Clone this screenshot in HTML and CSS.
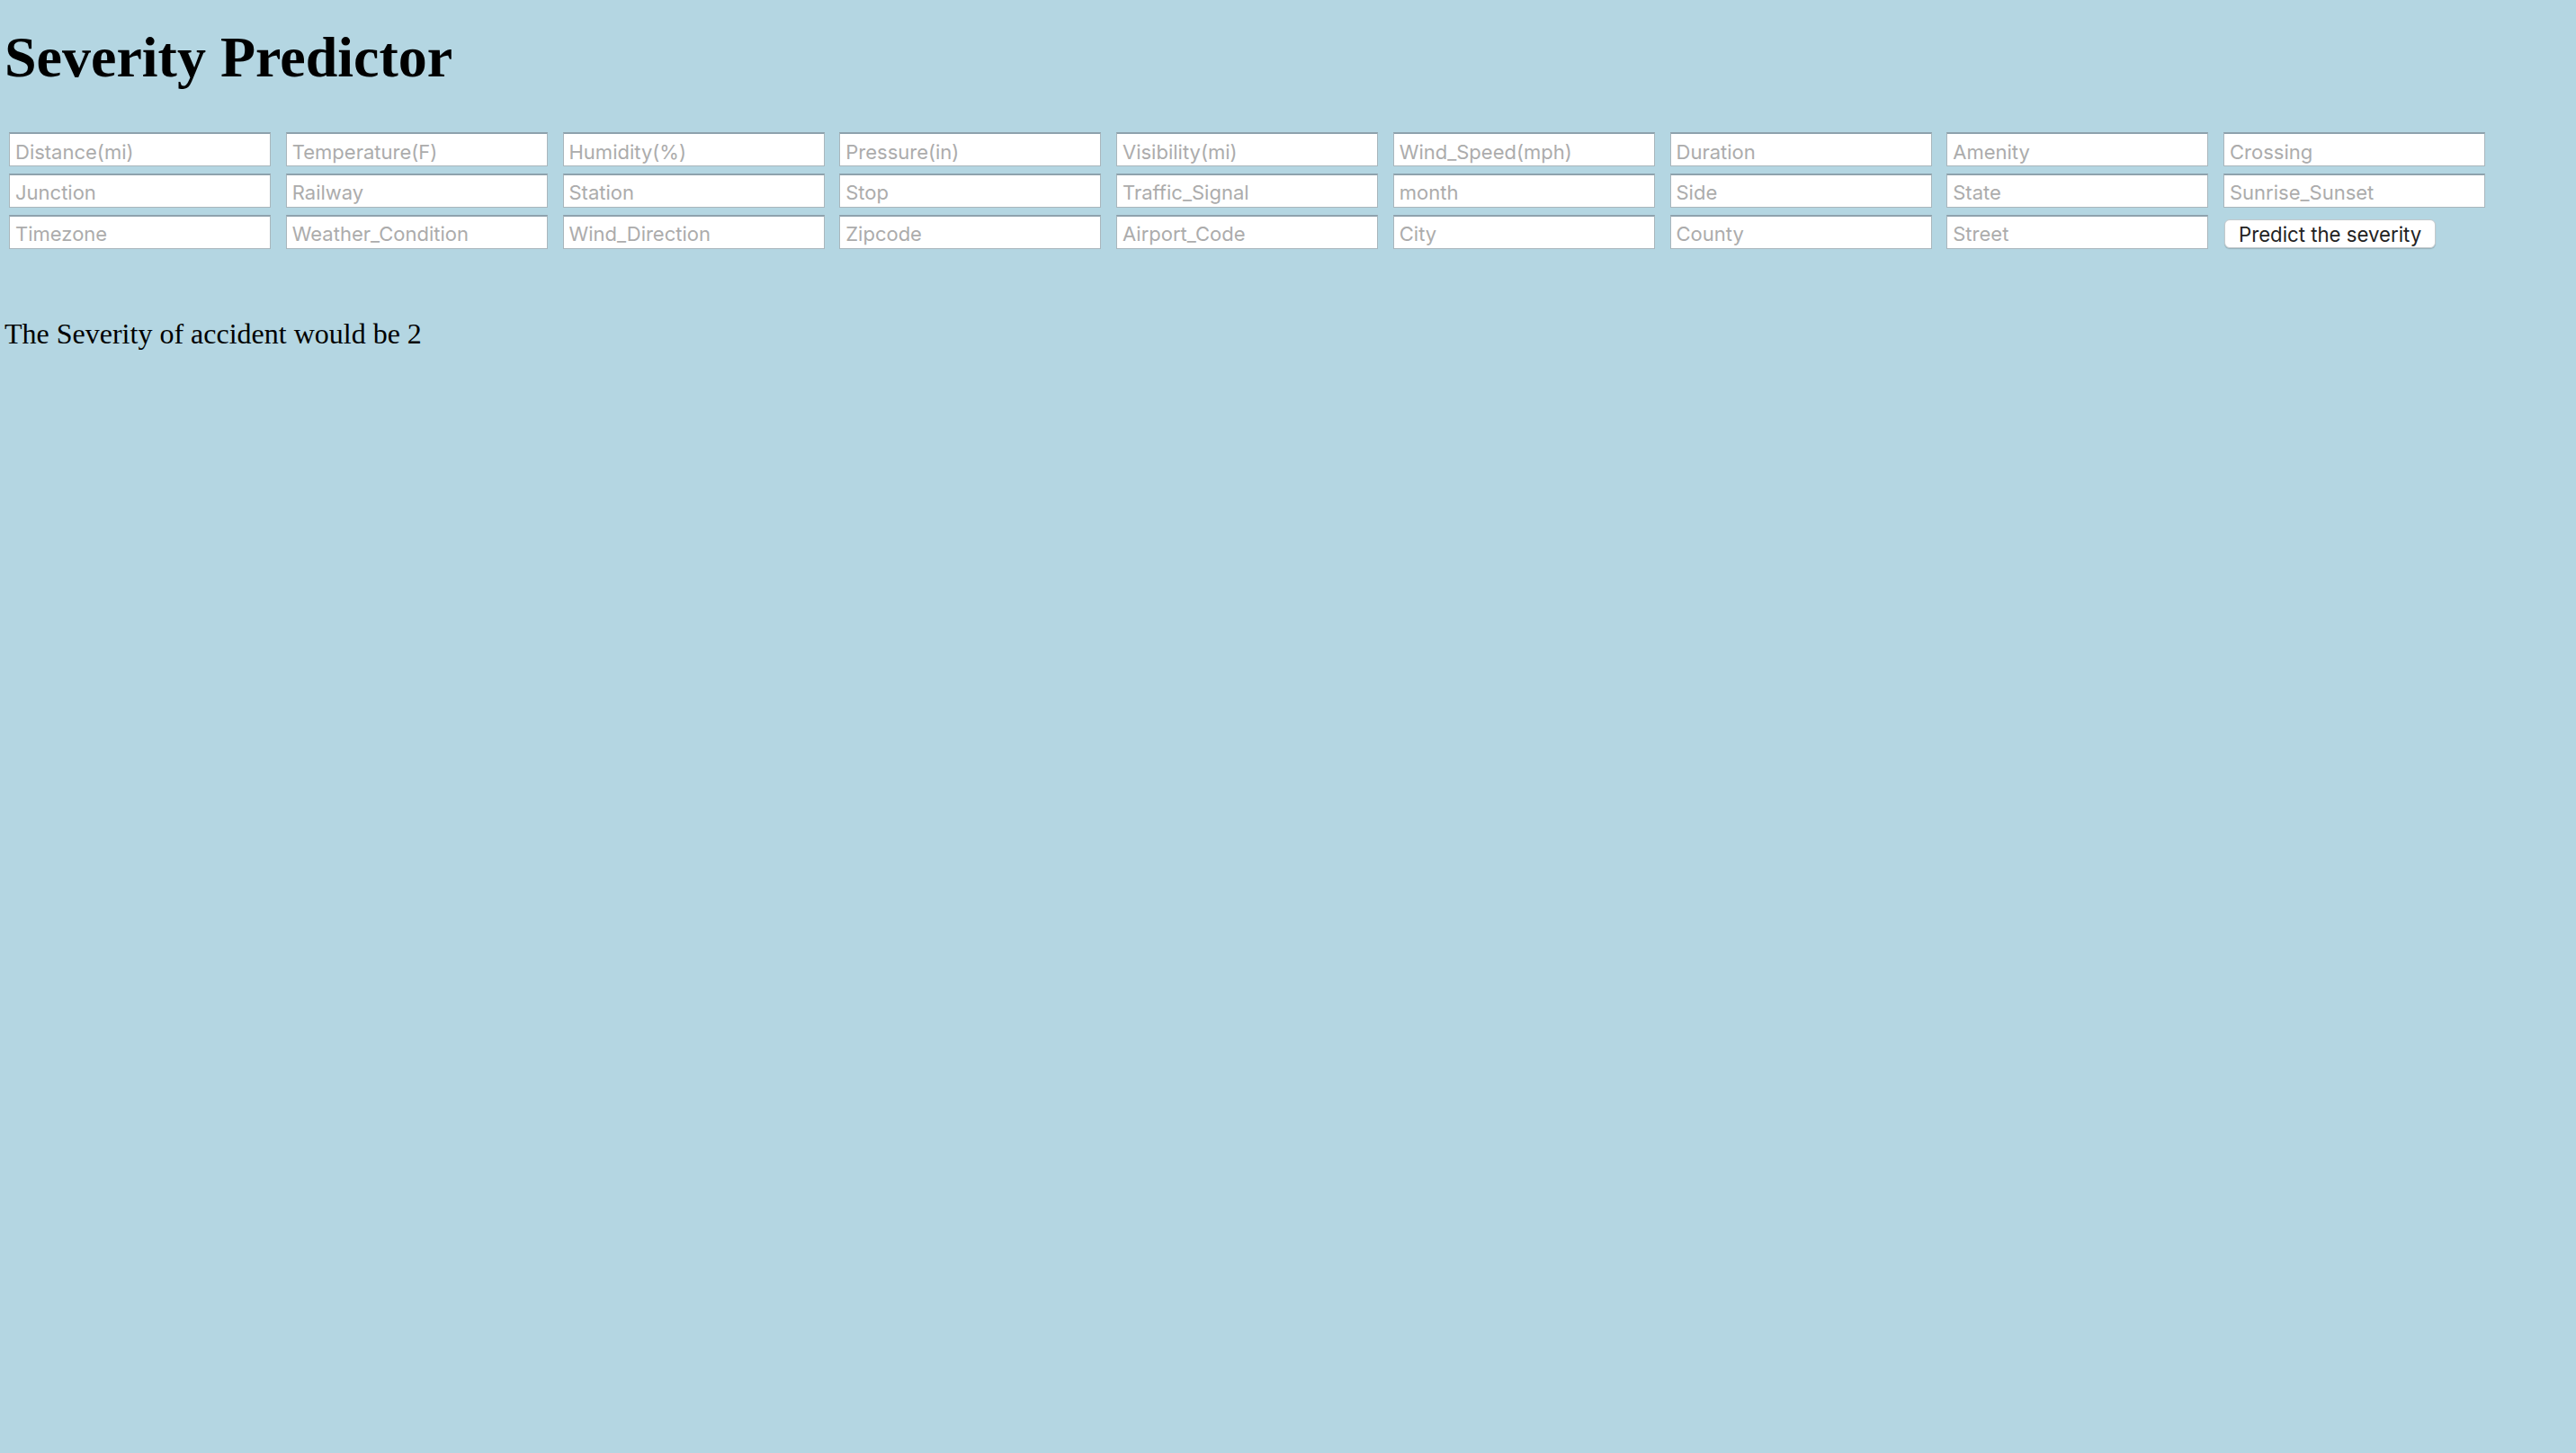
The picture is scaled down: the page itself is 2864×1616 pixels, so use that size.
FILE: index.html
```html
<!DOCTYPE html>
<html lang="en">
<head>
<meta charset="utf-8">
<title>Severity Predictor</title>
<link rel="stylesheet" href="styles.css">
</head>
<body>
<h1 class="title">Severity Predictor</h1>
<form class="fields">
  <input class="field" type="text" placeholder="Distance(mi)">
  <input class="field" type="text" placeholder="Temperature(F)">
  <input class="field" type="text" placeholder="Humidity(%)">
  <input class="field" type="text" placeholder="Pressure(in)">
  <input class="field" type="text" placeholder="Visibility(mi)">
  <input class="field" type="text" placeholder="Wind_Speed(mph)">
  <input class="field" type="text" placeholder="Duration">
  <input class="field" type="text" placeholder="Amenity">
  <input class="field" type="text" placeholder="Crossing">
  <input class="field" type="text" placeholder="Junction">
  <input class="field" type="text" placeholder="Railway">
  <input class="field" type="text" placeholder="Station">
  <input class="field" type="text" placeholder="Stop">
  <input class="field" type="text" placeholder="Traffic_Signal">
  <input class="field" type="text" placeholder="month">
  <input class="field" type="text" placeholder="Side">
  <input class="field" type="text" placeholder="State">
  <input class="field" type="text" placeholder="Sunrise_Sunset">
  <input class="field" type="text" placeholder="Timezone">
  <input class="field" type="text" placeholder="Weather_Condition">
  <input class="field" type="text" placeholder="Wind_Direction">
  <input class="field" type="text" placeholder="Zipcode">
  <input class="field" type="text" placeholder="Airport_Code">
  <input class="field" type="text" placeholder="City">
  <input class="field" type="text" placeholder="County">
  <input class="field" type="text" placeholder="Street">
  <button class="predict" type="button">Predict the severity</button>
</form>
<p class="result">The Severity of accident would be 2</p>
</body>
</html>
```
FILE: styles.css
```css
html, body {
  margin: 0;
  background: #b4d6e2;
}
body {
  padding: 27px 0 0 5px;
  font-family: "Liberation Serif", "Times New Roman", serif;
  color: #000;
}
.title {
  margin: 0;
  font-size: 64px;
  font-weight: bold;
  line-height: normal;
}
.fields {
  display: grid;
  grid-template-columns: repeat(9, 291px);
  grid-auto-rows: 38.4px;
  column-gap: 16.75px;
  row-gap: 7.4px;
  align-items: center;
  margin: 46px 0 0 5px;
}
.field {
  box-sizing: border-box;
  width: 291px;
  height: 38.4px;
  margin: 0;
  padding: 4px 0 0 6px;
  background: #fff;
  border: 1px solid #a9b6bc;
  border-top: 2px solid #8ea2ad;
  border-radius: 0;
  font-family: Inter, "Noto Sans", sans-serif;
  font-size: 22px;
  color: #333;
  outline: none;
}
.field::placeholder {
  color: #acacac;
  opacity: 1;
}
.predict {
  justify-self: start;
  box-sizing: border-box;
  height: 32px;
  margin: 4px 0 0 1px;
  padding: 3px 15px 0;
  background: #fff;
  border: 1px solid #c3c9cc;
  border-radius: 6px;
  box-shadow: 0 1px 1px rgba(0, 0, 0, 0.18);
  font-family: Inter, "Noto Sans", sans-serif;
  font-size: 22.2px;
  color: #222;
  line-height: 1;
}
.result {
  margin: 76px 0 0 0;
  font-size: 32px;
  line-height: normal;
}
```
